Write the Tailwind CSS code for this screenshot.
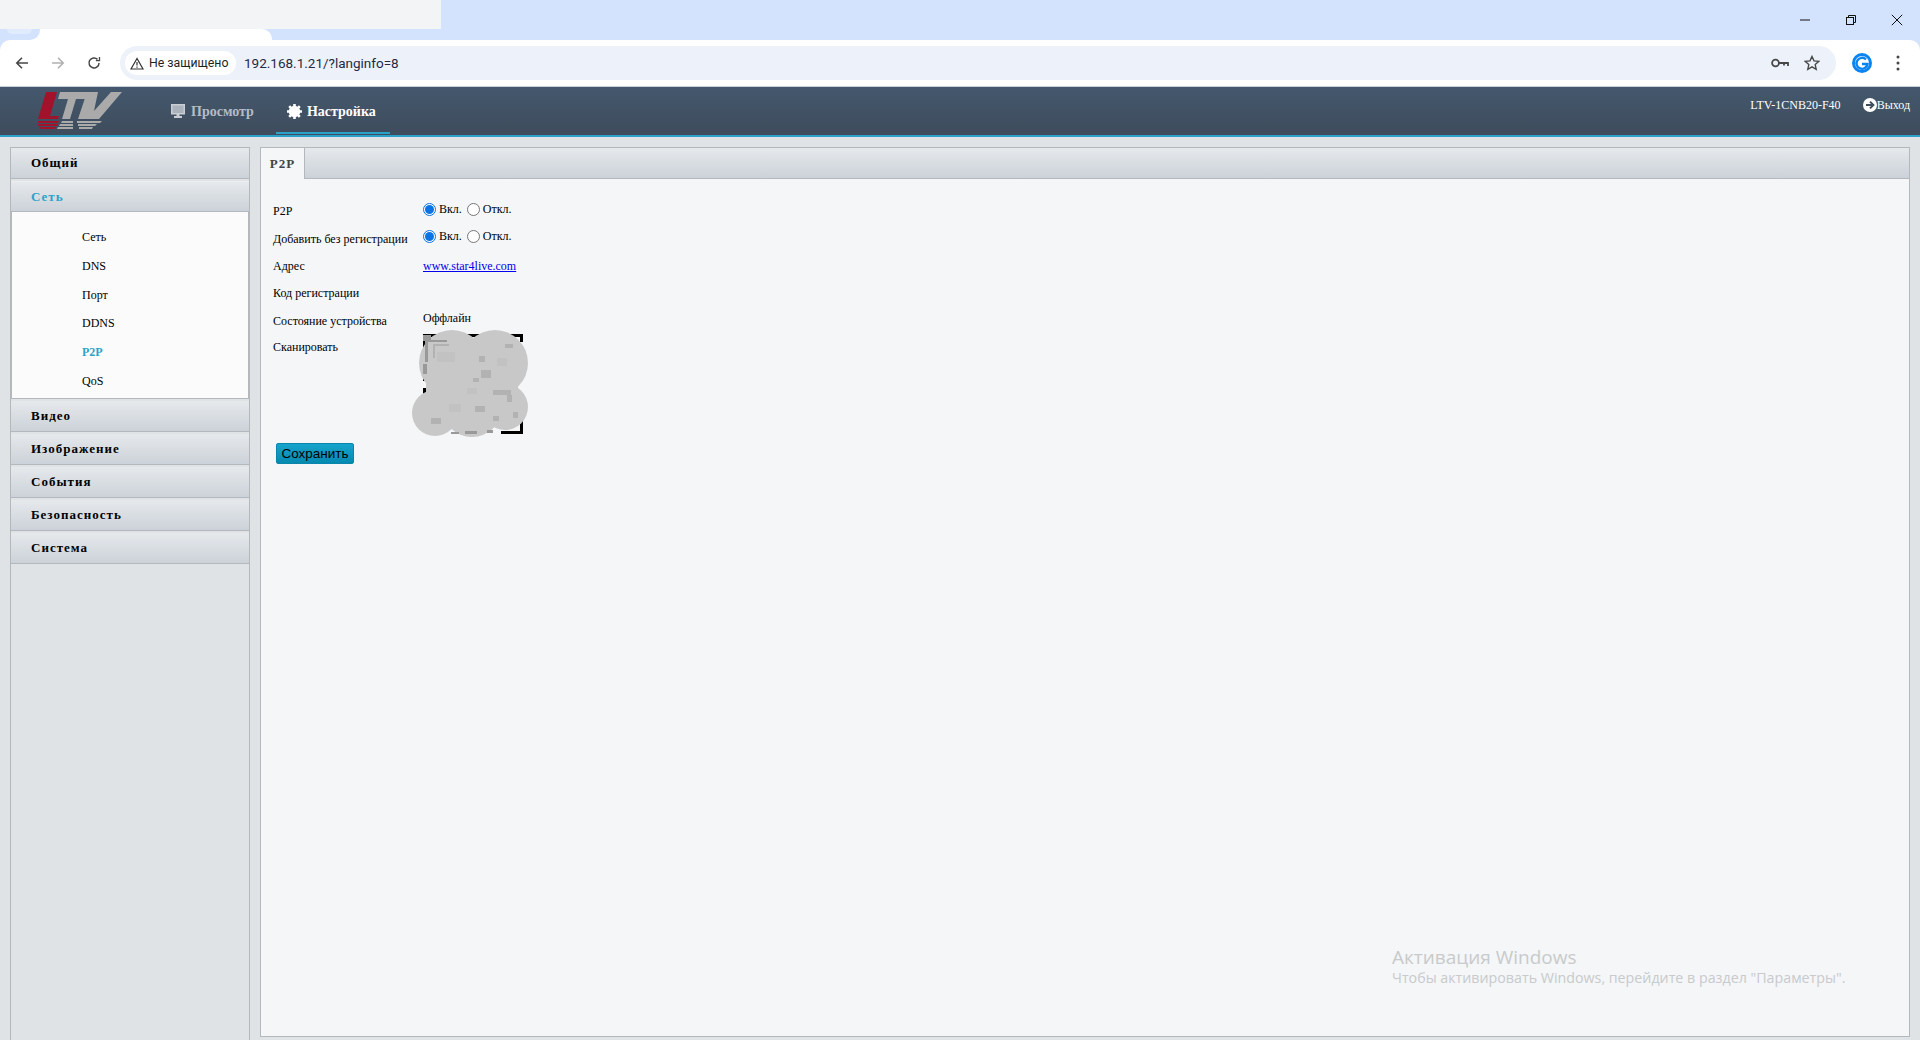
<!DOCTYPE html>
<html lang="ru">
<head>
  <meta charset="UTF-8" />
  <title>LTV P2P</title>
  <script src="https://cdn.jsdelivr.net/npm/@tailwindcss/browser@4"></script>
</head>
<body class="h-[1040px] w-[1920px] overflow-hidden bg-[#dfe3e6] font-['Liberation_Serif',serif] text-[12px] text-black">

  <!-- Browser chrome -->
  <div class="bg-[#d3e3fd]">
    <div class="relative h-[40px]">
      <div class="h-[29px] w-[441px] bg-[#f3f4f6]"></div>
      <div class="absolute left-0 top-[29px] h-[11px] w-[272px] rounded-tr-[10px] bg-white">
        <div class="h-[11px] w-[40px] rounded-br-[10px] bg-[#d3e3fd]">
          <div class="ml-[7px] h-[5px] w-[25px] rounded-b-[8px] bg-[#e0ebfd]"></div>
        </div>
      </div>
      <div class="absolute right-0 top-0 flex h-[40px] items-center">
        <svg class="mr-[34px]" width="12" height="12" viewBox="0 0 12 12"><path d="M1 6h10" stroke="#111" fill="none"/></svg>
        <svg class="mr-[34px]" width="12" height="12" viewBox="0 0 12 12" fill="none" stroke="#111"><rect x="1.5" y="3.5" width="7" height="7"/><path d="M3.5 3.5v-2h7v7h-2"/></svg>
        <svg class="mr-[17px]" width="12" height="12" viewBox="0 0 12 12" fill="none" stroke="#111"><path d="M.8.8l10.4 10.4M11.200.8L.8 11.200"/></svg>
      </div>
    </div>

    <!-- Browser toolbar -->
    <div class="flex h-[46px] items-center rounded-t-[10px] bg-white">
      <div class="ml-[15px] flex w-[105px] items-center">
        <svg class="mr-[22px]" width="14" height="14" viewBox="0 0 14 14" fill="none" stroke="#474747" stroke-width="1.600"><path d="M13 7H2M7 1.800L1.800 7 7 12.200"/></svg>
        <svg class="mr-[22px]" width="14" height="14" viewBox="0 0 14 14" fill="none" stroke="#b1b1b1" stroke-width="1.600"><path d="M1 7h11M7 1.800L12.200 7 7 12.200"/></svg>
        <svg width="14" height="14" viewBox="0 0 14 14" fill="none" stroke="#474747" stroke-width="1.500"><path d="M12 7a5 5 0 1 1-1.500-3.600"/><path d="M12.500 1v3.600H8.900" stroke-width="1.300"/></svg>
      </div>
      <div class="flex h-[34px] w-[1716px] items-center rounded-full bg-[#edf2fa] pl-[5px] font-['Roboto',sans-serif]">
        <div class="flex h-[24px] w-[111px] items-center rounded-full bg-white pl-[5px] text-[12.300px] text-[#1f1f1f]">
          <svg class="mr-[5px]" width="14" height="13" viewBox="0 0 14 13" fill="none" stroke="#333" stroke-width="1.200"><path d="M7 1.500L1 12h12z"/><path d="M7 5v3.500M7 9.500v1.200"/></svg>
          <span>Не защищено</span>
        </div>
        <span class="ml-[8px] text-[13.500px] text-[#1f2a44]">192.168.1.21/?langinfo=8</span>
        <div class="ml-auto flex items-center">
          <svg class="mr-[15px]" width="18" height="12" viewBox="0 0 18 12" fill="none" stroke="#474747" stroke-width="1.800"><circle cx="4.500" cy="6" r="3.400"/><path d="M8 6h9v3M13 6v2.500"/></svg>
          <svg class="mr-[16px]" width="16" height="16" viewBox="0 0 16 16" fill="none" stroke="#474747" stroke-width="1.400"><path d="M8 1.500l2 4.400 4.700.5-3.500 3.200 1 4.700L8 11.900l-4.200 2.400 1-4.700L1.300 6.400 6 5.900z"/></svg>
        </div>
      </div>
      <svg class="ml-[16px]" width="20" height="20" viewBox="0 0 20 20"><circle cx="10" cy="10" r="10" fill="#0b84f3"/><circle cx="10" cy="10" r="7" fill="#fff"/><path d="M14 6.500A5.500 5.500 0 1 0 15.500 11H10" fill="none" stroke="#0b84f3" stroke-width="2.400"/></svg>
      <svg class="ml-[24px]" width="4" height="16" viewBox="0 0 4 16" fill="#474747"><circle cx="2" cy="2" r="1.500"/><circle cx="2" cy="8" r="1.500"/><circle cx="2" cy="14" r="1.500"/></svg>
    </div>
  </div>

  <!-- Camera page header -->
  <header class="flex h-[51px] border-t border-[#c9ced4] border-b-[2px] border-b-[#2ba3c9] bg-gradient-to-b from-[#44586d] to-[#3e4c5c]">
    <svg class="ml-[37px] mt-[5px]" width="86" height="38" viewBox="0 0 86 38">
      <path d="M9 0h11l-7 24h9l-1 3H1z" fill="#a3122b"/>
      <path d="M1 29h21l-1 2H1zM1 32h20l-1 2H1zM2 35h17l-1 2H4z" fill="#a3122b"/>
      <path d="M23 0h28l-2 7H39l-6 20h-8l6-20h-10z" fill="#aaaaaa"/>
      <path d="M50 0h11l-4 19L74 0h11L62 27H41z" fill="#aaaaaa"/>
      <path d="M25 29h11v2H24zM40 29h25l-2 2H40zM23 32h13v2H22zM41 32h19l-2 2H41zM21 35h15v2H20zM42 35h14l-1 2H42z" fill="#aaaaaa"/>
    </svg>
    <nav class="ml-[48px] flex pt-[1px] text-[14px] font-bold">
      <a class="flex h-[46px] items-center text-[#b4bcc5]">
        <svg class="mr-[6px]" width="14" height="14" viewBox="0 0 14 14" fill="#c9ced4"><path d="M0 0h14v10.500H0zM5.500 10.500h3V12h2.500v2H3v-2h2.500z"/><path d="M1.500 1.500h11V9h-11z" fill="#aab2bb"/></svg>
        Просмотр
      </a>
      <a class="relative ml-[22px] flex h-[46px] w-[114px] items-center pl-[11px] text-white">
        <svg class="mr-[5px]" width="15" height="15" viewBox="0 0 15 15"><g stroke="#fff" stroke-width="2.600"><path d="M7.500 0v15M0 7.500h15M2.200 2.200l10.600 10.600M12.800 2.200L2.200 12.800"/></g><circle cx="7.500" cy="7.500" r="4.500" fill="none" stroke="#fff" stroke-width="2.500"/></svg>
        Настройка
        <span class="absolute bottom-0 left-0 h-[2px] w-[114px] bg-[#2ba3c9]"></span>
      </a>
    </nav>
    <div class="ml-auto flex items-start pt-[9px] text-[12px] text-white">
      <span class="mr-[22px]">LTV-1CNB20-F40</span>
      <svg class="mt-[2px]" width="14" height="14" viewBox="0 0 14 14"><circle cx="7" cy="7" r="7" fill="#fff"/><path d="M3 7h7M7 3.600L10.400 7 7 10.400" fill="none" stroke="#3f4d5e" stroke-width="2"/></svg>
      <span class="mr-[10px]">Выход</span>
    </div>
  </header>

  <div class="flex h-[903px] pl-[10px] pt-[10px]">
    <!-- Sidebar -->
    <aside class="h-[893px] w-[240px] shrink-0 border-x border-t border-[#b4b8bc]">
      <div class="flex h-[31px] items-center border-b border-[#b4b8bc] bg-gradient-to-b from-[#e6e9ec] to-[#ccd2d9] pl-[20px] text-[13px] font-bold tracking-[1px]">Общий</div>
      <div class="mt-[2px] flex h-[31px] items-center border-y border-t-[#eceef0] border-b-[#b4b8bc] bg-gradient-to-b from-[#e6e9ec] to-[#ccd2d9] pl-[20px] text-[13px] font-bold tracking-[1px] text-[#2ba3c9]">Сеть</div>
      <ul class="h-[187px] border-x border-b border-[#b4b8bc] bg-[#fbfbfb] pl-[70px] pt-[11px]">
        <li class="h-[28.800px] leading-[29px]">Сеть</li>
        <li class="h-[28.800px] leading-[29px]">DNS</li>
        <li class="h-[28.800px] leading-[29px]">Порт</li>
        <li class="h-[28.800px] leading-[29px]">DDNS</li>
        <li class="h-[28.800px] font-bold leading-[29px] text-[#2ba3c9]">P2P</li>
        <li class="h-[28.800px] leading-[29px]">QoS</li>
      </ul>
      <div class="mt-[2px] flex h-[31px] items-center border-b border-[#b4b8bc] bg-gradient-to-b from-[#e6e9ec] to-[#ccd2d9] pl-[20px] text-[13px] font-bold tracking-[1px]">Видео</div>
      <div class="mt-[2px] flex h-[31px] items-center border-b border-[#b4b8bc] bg-gradient-to-b from-[#e6e9ec] to-[#ccd2d9] pl-[20px] text-[13px] font-bold tracking-[1px]">Изображение</div>
      <div class="mt-[2px] flex h-[31px] items-center border-b border-[#b4b8bc] bg-gradient-to-b from-[#e6e9ec] to-[#ccd2d9] pl-[20px] text-[13px] font-bold tracking-[1px]">События</div>
      <div class="mt-[2px] flex h-[31px] items-center border-b border-[#b4b8bc] bg-gradient-to-b from-[#e6e9ec] to-[#ccd2d9] pl-[20px] text-[13px] font-bold tracking-[1px]">Безопасность</div>
      <div class="mt-[2px] flex h-[31px] items-center border-b border-[#b4b8bc] bg-gradient-to-b from-[#e6e9ec] to-[#ccd2d9] pl-[20px] text-[13px] font-bold tracking-[1px]">Система</div>
    </aside>

    <!-- Main panel -->
    <main class="relative ml-[10px] h-[890px] w-[1650px] border border-[#b4b8bc] bg-[#f4f6f8]">
      <div class="flex h-[31px] border-b border-[#b4b8bc] bg-gradient-to-b from-[#e6e9ec] to-[#ccd2d9]">
        <div class="-mb-[1px] flex h-[31px] w-[44px] items-center justify-center border-r border-[#b4b8bc] bg-[#f4f6f8] text-[13px] font-bold tracking-[1px] text-[#444]">P2P</div>
      </div>

      <div class="pl-[12px] pt-[22px]">
        <div class="flex h-[27px]">
          <div class="w-[150px] pt-[1px]">P2P</div>
          <label class="flex h-[16px] items-center"><span class="mr-[3px] flex size-[13px] items-center justify-center rounded-full border border-[#0b74e5] bg-white"><span class="size-[9px] rounded-full bg-[#0b74e5]"></span></span>Вкл.</label>
          <label class="ml-[5px] flex h-[16px] items-center"><span class="mr-[3px] size-[13px] rounded-full border border-[#767676] bg-white"></span>Откл.</label>
        </div>
        <div class="flex h-[29px]">
          <div class="w-[150px] pt-[2px]">Добавить без регистрации</div>
          <label class="flex h-[16px] items-center"><span class="mr-[3px] flex size-[13px] items-center justify-center rounded-full border border-[#0b74e5] bg-white"><span class="size-[9px] rounded-full bg-[#0b74e5]"></span></span>Вкл.</label>
          <label class="ml-[5px] flex h-[16px] items-center"><span class="mr-[3px] size-[13px] rounded-full border border-[#767676] bg-white"></span>Откл.</label>
        </div>
        <div class="flex h-[27px]">
          <div class="w-[150px]">Адрес</div>
          <a href="#" class="h-[16px] text-[#0000ee] underline">www.star4live.com</a>
        </div>
        <div class="flex h-[28px]"><div class="w-[150px]">Код регистрации</div></div>
        <div class="flex h-[27px]">
          <div class="w-[150px]">Состояние устройства</div>
          <div class="-mt-[3px]">Оффлайн</div>
        </div>
        <div class="flex h-[97px]">
          <div class="-mt-[1px] w-[150px]">Сканировать</div>
          <!-- QR code, smudged out in the screenshot -->
          <svg class="-ml-[14px] -mt-[11px]" width="122" height="112" viewBox="0 0 122 112">
            <path d="M14 6h100v3H14zM111 6h3v8h-3zM14 6h3v30h-3zM14 60h5v6h-5zM14 48h4v5h-4zM92 103h22v3H92zM111 92h3v14h-3z" fill="#000"/>
            <g fill="#c8c8c8">
              <circle cx="43" cy="35" r="33"/><circle cx="86" cy="35" r="33"/><circle cx="26" cy="85" r="23"/>
              <circle cx="63" cy="79" r="30"/><circle cx="96" cy="79" r="23"/><rect x="17" y="12" width="92" height="78"/>
            </g>
            <path d="M14 7h8v6h-8zM16 12h22v2H16zM16 14h3v20h-3zM14 36h4v10h-4zM42 104h8v2h-8zM56 103h12v3H56zM78 102h6v3h-6z" fill="#999999"/>
            <path d="M24 16h16v2H24zM24 18h2v12h-2zM96 16h8v4h-8zM70 28h6v6h-6zM72 42h10v8H72zM64 50h6v4h-6zM84 62h18v5H84zM98 67h5v7h-5zM66 78h10v6H66zM84 88h6v5h-6zM22 90h10v6H22zM104 84h5v6h-5z" fill="#b2b2b2"/>
            <path d="M28 24h18v10H28zM58 60h10v6H58zM40 76h12v8H40zM88 30h10v8H88z" fill="#c2c2c2"/>
          </svg>
        </div>
        <button class="ml-[3px] mt-[7px] h-[21px] w-[78px] rounded-[2px] border border-[#0a86ac] bg-gradient-to-b from-[#16a4cc] to-[#0589b0] font-['Liberation_Sans',sans-serif] text-[13.500px] leading-none">Сохранить</button>
      </div>

      <!-- Windows activation watermark -->
      <div class="absolute left-[1131px] top-[797px] font-['Open_Sans',sans-serif] text-[#c8cacc]">
        <div class="text-[19px] leading-[24px]">Активация Windows</div>
        <div class="text-[14.250px] leading-[18px]">Чтобы активировать Windows, перейдите в раздел "Параметры".</div>
      </div>
    </main>
  </div>
</body>
</html>
